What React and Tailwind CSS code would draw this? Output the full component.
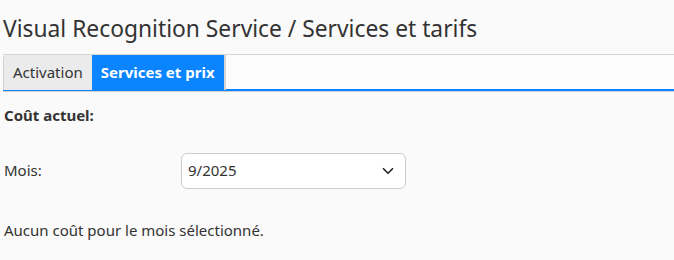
import { ChevronDown } from "lucide-react";

export default function App() {
  return (
    <div
      className="min-h-screen bg-[#fafafa] text-[#333]"
      style={{ fontFamily: "'Noto Sans', sans-serif" }}
    >
      <h1 className="pl-[3px] pt-[14px] text-[22.8px] leading-[30px] text-[#333]">
        Visual Recognition Service / Services et tarifs
      </h1>

      <div className="ml-[3px] mt-[10px] flex h-[38px] border-t border-[#d6d6d6] bg-[#fcfcfc]">
        <div className="flex h-[35px] items-center rounded-tl-[4px] border-l border-[#d0d0d0] bg-[#ebebeb] px-[9px] text-[15px]">
          Activation
        </div>
        <div className="flex h-[35px] items-center border-r-2 border-[#d6d6d6] bg-[#0a84ff] px-[9px] text-[15px] font-bold text-white">
          Services et prix
        </div>
      </div>
      <div className="-mt-[3px] ml-[3px] h-[3px] border-b border-[#cfcfcf] bg-[#0a84ff]" />

      <div className="px-[4px] text-[15px]">
        <p className="mt-[12px] font-bold">Coût actuel:</p>

        <div className="mt-[26px] flex items-center">
          <span className="w-[177px]">Mois:</span>
          <div className="flex h-[36px] w-[225px] items-center justify-between rounded-[6px] border border-[#cccccc] bg-white pl-[6px] pr-[8px]">
            <span>9/2025</span>
            <ChevronDown size={18} strokeWidth={2.2} className="text-[#222]" />
          </div>
        </div>

        <p className="mt-[30px]">Aucun coût pour le mois sélectionné.</p>
      </div>
    </div>
  );
}
